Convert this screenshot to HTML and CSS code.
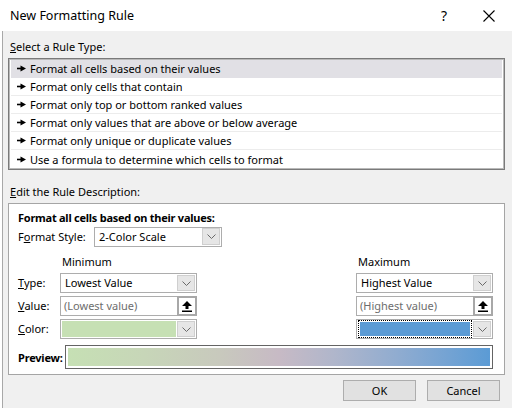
FILE: index.html
```html
<!DOCTYPE html>
<html>
<head>
<meta charset="utf-8">
<link rel="stylesheet" href="styles.css">
</head>
<body>
<div class="titlebar">
  <span class="title">New Formatting Rule</span>
  <span class="help">?</span>
  <span class="close"><svg width="12" height="12" viewBox="0 0 12 12"><path d="M0.5 0.5L11.5 11.5M11.5 0.5L0.5 11.5" stroke="#000" stroke-width="1.1" fill="none"/></svg></span>
</div>
<div class="dialog">
  <div class="label"><u>S</u>elect a Rule Type:</div>
  <div class="list">
    <div class="item sel"><svg class="arr" width="9" height="7" viewBox="0 0 9 7"><path d="M0 3.5H4" stroke="#000" stroke-width="1.6"/><polygon points="3.5,0.5 9,3.5 3.5,6.5" fill="#000"/></svg>Format all cells based on their values</div>
    <div class="item"><svg class="arr" width="9" height="7" viewBox="0 0 9 7"><path d="M0 3.5H4" stroke="#000" stroke-width="1.6"/><polygon points="3.5,0.5 9,3.5 3.5,6.5" fill="#000"/></svg>Format only cells that contain</div>
    <div class="item"><svg class="arr" width="9" height="7" viewBox="0 0 9 7"><path d="M0 3.5H4" stroke="#000" stroke-width="1.6"/><polygon points="3.5,0.5 9,3.5 3.5,6.5" fill="#000"/></svg>Format only top or bottom ranked values</div>
    <div class="item"><svg class="arr" width="9" height="7" viewBox="0 0 9 7"><path d="M0 3.5H4" stroke="#000" stroke-width="1.6"/><polygon points="3.5,0.5 9,3.5 3.5,6.5" fill="#000"/></svg>Format only values that are above or below average</div>
    <div class="item"><svg class="arr" width="9" height="7" viewBox="0 0 9 7"><path d="M0 3.5H4" stroke="#000" stroke-width="1.6"/><polygon points="3.5,0.5 9,3.5 3.5,6.5" fill="#000"/></svg>Format only unique or duplicate values</div>
    <div class="item last"><svg class="arr" width="9" height="7" viewBox="0 0 9 7"><path d="M0 3.5H4" stroke="#000" stroke-width="1.6"/><polygon points="3.5,0.5 9,3.5 3.5,6.5" fill="#000"/></svg>Use a formula to determine which cells to format</div>
  </div>
  <div class="label label2"><u>E</u>dit the Rule Description:</div>
  <div class="desc">
    <div class="heading">Format all cells based on their values:</div>
    <div class="stylerow">
      <span class="flabel">F<u>o</u>rmat Style:</span>
      <div class="combo stylecombo"><span class="txt">2-Color Scale</span><span class="btn"><svg width="9" height="5" viewBox="0 0 9 5"><path d="M0.5 0.5L4.5 4.5L8.5 0.5" stroke="#6a6a6a" stroke-width="1" fill="none"/></svg></span></div>
    </div>
    <div class="grid">
      <span></span><span class="colhead">Minimum</span><span></span><span class="colhead">Maximum</span>

      <span class="rlabel"><u>T</u>ype:</span>
      <div class="combo"><span class="txt">Lowest Value</span><span class="btn"><svg width="9" height="5" viewBox="0 0 9 5"><path d="M0.5 0.5L4.5 4.5L8.5 0.5" stroke="#6a6a6a" stroke-width="1" fill="none"/></svg></span></div>
      <span></span>
      <div class="combo"><span class="txt">Highest Value</span><span class="btn"><svg width="9" height="5" viewBox="0 0 9 5"><path d="M0.5 0.5L4.5 4.5L8.5 0.5" stroke="#6a6a6a" stroke-width="1" fill="none"/></svg></span></div>

      <span class="rlabel"><u>V</u>alue:</span>
      <div class="vinput"><span class="field">(Lowest value)</span><span class="pick"><svg width="10" height="11" viewBox="0 0 10 11"><polygon points="5,0 10,5 6.5,5 6.5,8 3.5,8 3.5,5 0,5" fill="#000"/><rect x="0" y="9.5" width="10" height="1.5" fill="#000"/></svg></span></div>
      <span></span>
      <div class="vinput"><span class="field">(Highest value)</span><span class="pick"><svg width="10" height="11" viewBox="0 0 10 11"><polygon points="5,0 10,5 6.5,5 6.5,8 3.5,8 3.5,5 0,5" fill="#000"/><rect x="0" y="9.5" width="10" height="1.5" fill="#000"/></svg></span></div>

      <span class="rlabel"><u>C</u>olor:</span>
      <div class="combo color"><span class="swatch green"></span><span class="btn"><svg width="9" height="5" viewBox="0 0 9 5"><path d="M0.5 0.5L4.5 4.5L8.5 0.5" stroke="#6a6a6a" stroke-width="1" fill="none"/></svg></span></div>
      <span></span>
      <div class="combo color"><span class="focus"><span class="swatch blue"></span></span><span class="btn"><svg width="9" height="5" viewBox="0 0 9 5"><path d="M0.5 0.5L4.5 4.5L8.5 0.5" stroke="#6a6a6a" stroke-width="1" fill="none"/></svg></span></div>
    </div>
    <div class="previewrow">
      <span class="plabel">Preview:</span>
      <div class="pbox"><div class="grad"></div></div>
    </div>
  </div>
  <div class="buttons">
    <button class="btnp">OK</button>
    <button class="btnp">Cancel</button>
  </div>
</div>
</body>
</html>
```
FILE: styles.css
```css
* { box-sizing: border-box; }
html, body { margin: 0; padding: 0; }
body {
  width: 512px;
  height: 417px;
  background: #ffffff;
  font-family: "Segoe UI", "Noto Sans", sans-serif;
  font-size: 11px;
  color: #000;
  overflow: hidden;
}
u { text-decoration: underline; text-underline-offset: 1px; }

.titlebar {
  height: 31px;
  display: flex;
  align-items: center;
  background: #fff;
  padding-left: 10px;
}
.title { font-size: 12.5px; flex: 1; }
.help { font-size: 14px; width: 40px; margin-right: 19px; text-align: center; }
.close { width: 12px; height: 12px; margin-right: 17px; display: flex; }

.dialog {
  margin-left: 2px;
  border-left: 1px solid #a8a8a8;
  height: 377px;
  background: #f0f0f0;
  padding: 8px 7px 0 5px;
}
.label { height: 16px; line-height: 16px; padding-left: 2px; margin-bottom: 3px; }
.label2 { margin-top: 14px; }

.list {
  background: #fff;
  border: 1px solid #7a7a7a;
  box-shadow: inset 0 0 0 1px #b9b9b9;
  padding: 1px 2px;
  height: 112px;
}
.item {
  height: 18px;
  line-height: 17px;
  padding-left: 6px;
  display: flex;
  align-items: center;
  border-bottom: 1px solid #ececec;
}
.item.last { border-bottom: none; }
.item.sel { background: #e1e0e5; border-bottom-color: #e1e0e5; }
.arr { margin-right: 4px; flex: none; }

.desc {
  background: #fff;
  border: 1px solid #a5a5a5;
  height: 172px;
  padding: 6px 11px 5px 9px;
}
.heading { font-weight: bold; height: 16px; line-height: 16px; letter-spacing: -0.25px; }
.stylerow { display: flex; align-items: center; height: 21px; }
.flabel { width: 76px; }
.stylecombo { width: 128px; height: 21px; }

.combo {
  height: 20px;
  border: 1px solid #adadad;
  background: #fff;
  display: flex;
  align-items: center;
}
.combo .txt { flex: 1; padding-left: 4px; line-height: 16px; }
.combo .btn {
  width: 18px;
  height: 16px;
  margin-right: 1px;
  margin-left: 1px;
  background: #e6e6e6;
  border: 1px solid #cfcfcf;
  display: flex;
  align-items: center;
  justify-content: center;
  flex: none;
}
.stylecombo .btn { height: 17px; }

.grid {
  margin-top: 7px;
  display: grid;
  grid-template-columns: 42px 137px 1fr 137px;
  grid-template-rows: 16px 20px 20px 20px;
  row-gap: 3px;
  align-items: center;
}
.colhead { padding-left: 2px; line-height: 16px; }
.rlabel { line-height: 16px; }

.vinput { display: flex; height: 20px; }
.vinput .field {
  flex: 1;
  border: 1px solid #adadad;
  border-right: none;
  color: #6d6d6d;
  padding-left: 3px;
  line-height: 18px;
  background: #fff;
}
.vinput .pick {
  width: 20px;
  height: 20px;
  border: 2px solid #a8a8a8;
  background: #fff;
  display: flex;
  align-items: center;
  justify-content: center;
  flex: none;
}

.color { padding-left: 1px; }
.swatch { display: block; height: 14px; flex: 1; }
.swatch.green { background: #c6e0b4; height: 16px; }
.focus {
  flex: 1;
  height: 18px;
  border: 1px dotted #000;
  padding: 1px;
  display: flex;
}
.swatch.blue { background: #5b9bd5; }

.previewrow { display: flex; align-items: center; margin-top: 6px; height: 24px; }
.plabel { font-weight: bold; width: 47px; white-space: nowrap; letter-spacing: -0.2px; }
.pbox {
  width: 430px;
  height: 24px;
  border: 1px solid #646464;
  padding: 2px;
  background: #fff;
}
.grad {
  height: 100%;
  background: linear-gradient(to right, #c6e0b4 0%, #c7d6b8 18%, #c8c9bd 36%, #c7bac5 50%, #b0b6cb 63%, #90acd0 78%, #74a3d3 90%, #5b9bd5 100%);
}

.buttons {
  display: flex;
  justify-content: flex-end;
  gap: 11px;
  margin-top: 5px;
  padding-right: 5px;
}
.btnp {
  width: 73px;
  height: 21px;
  background: #e1e1e1;
  border: 1px solid #adadad;
  font-family: "Segoe UI", "Noto Sans", sans-serif;
  font-size: 11px;
  color: #000;
  padding: 0;
}
```
